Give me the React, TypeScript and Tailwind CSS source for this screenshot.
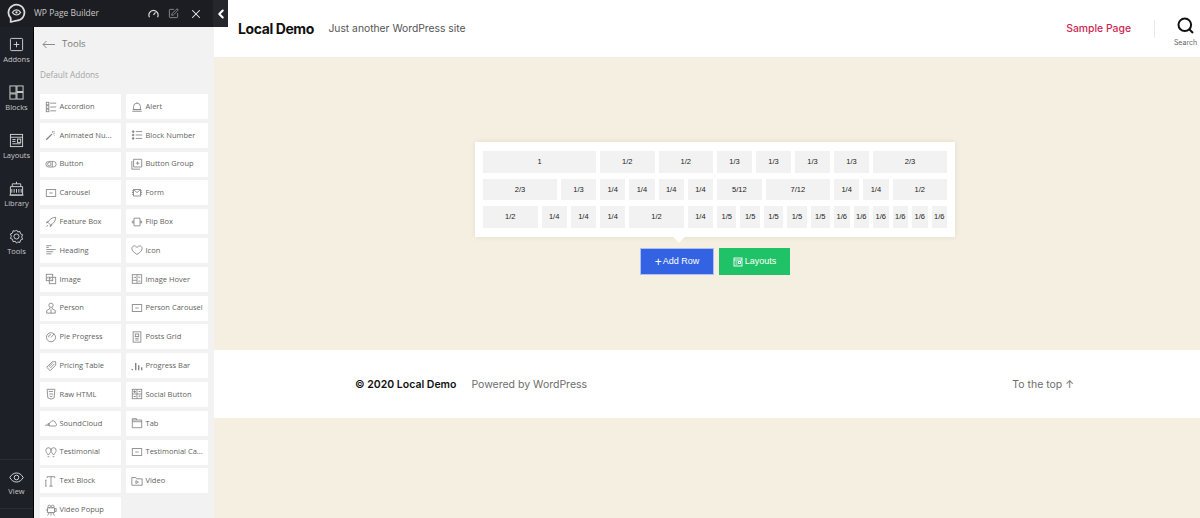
import React from "react";
import { X, SquarePen, ChevronLeft } from "lucide-react";

const S = ({ children }: { children: React.ReactNode }) => (
  <svg width="12" height="12" viewBox="0 0 14 14" fill="none" stroke="#858585" strokeWidth="1" className="shrink-0">{children}</svg>
);
const Slide = () => <S><rect x="1.500" y="3" width="11" height="8" /><path d="M5 7h4" /></S>;
const Acc = () => <S><rect x="1.500" y="1.500" width="3" height="3" /><rect x="1.500" y="5.500" width="3" height="3" /><rect x="1.500" y="9.500" width="3" height="3" /><path d="M6 2.500h7M6 7h7M6 11.500h7" /></S>;
const Alert = () => <S><path d="M3 10V6.500a4 4 0 0 1 8 0V10zM7 1.500v1M1.500 12h11" /><path d="M2 10h10" /></S>;
const Wand = () => <S><path d="M1.500 12.500L8 6" strokeWidth="1.500" /><path d="M9 2.500v1.500M11.500 5h-1.500M11 2.500l-1 1M8 5l1-1M11 7.500l-1-1" /></S>;
const BlockNum = () => <S><circle cx="2.500" cy="3" r="1" fill="#858585" /><circle cx="2.500" cy="7" r="1" fill="#858585" /><circle cx="2.500" cy="11" r="1" fill="#858585" /><path d="M5.500 3h7.500M5.500 7h7.500M5.500 11h7.500" /></S>;
const Btn = () => <S><rect x="1" y="4" width="12" height="6.500" rx="3.200" /><circle cx="5" cy="7.200" r="2" /><path d="M8.500 4v6.500" /></S>;
const BtnGroup = () => <S><path d="M3 10.500V1.500h9.500v9z" /><path d="M1 3.500v9.500h9.500M7.700 4v4M5.700 6h4" /></S>;
const Form = () => <S><rect x="3" y="3" width="8" height="7.500" /><path d="M3 3l4 3.500L11 3M1 4.500h2M1 6.500h2M1 8.500h2M11 4.500h2M11 6.500h2M11 8.500h2" /></S>;
const Rocket = () => <S><path d="M5 9l-1.500-1.500C5 4 8.500 1.500 12.500 1.500c0 4-2.500 7.500-6 9z" /><path d="M3.500 7.500l-2 .5 2-2.500M6.500 10.500l-.5 2 2.500-2M3.500 10.500l-1.500 2" /></S>;
const Flip = () => <S><path d="M3.500 2.500h7v9h-7zM3.500 6H1.500v2h2M10.500 6h2v2h-2" /></S>;
const Head = () => <S><path d="M1.500 2h6M1.500 4h3M1.500 6.500h11M1.500 9h8M1.500 11.500h6" /></S>;
const Heart = () => <S><path d="M7 12.300C3.500 9.800 1 7.700 1 5.200 1 3.300 2.400 2.200 4 2.200c1.300 0 2.400.7 3 1.900.6-1.200 1.700-1.900 3-1.900 1.600 0 3 1.100 3 3 0 2.500-2.500 4.600-6 7.100z" /></S>;
const Img = () => <S><rect x="1.500" y="1.500" width="7.500" height="7.500" /><rect x="5" y="5" width="7.500" height="7.500" /><path d="M1.500 7l2.500-2.500L7 7.500" /></S>;
const ImgHover = () => <S><rect x="1.500" y="2" width="11" height="10" /><path d="M1.500 8.500h5.500M7 2v10M8.500 5h2.500M8.500 9.500h2.500M3 6l1.500-1.500L6 6" /></S>;
const Pers = () => <S><circle cx="7" cy="3.800" r="2.500" /><path d="M5.500 6.500v1.500L2 10v3h10v-3L8.500 8V6.500M7 8.500v4.500" /></S>;
const Pie = () => <S><circle cx="7" cy="7.300" r="5.300" /><path d="M4 7.300a3 3 0 0 1 3-3M7 7.300l3.700-4" /></S>;
const Posts = () => <S><rect x="2.500" y="1" width="9" height="12" /><rect x="5" y="3.500" width="4" height="3" /><path d="M5 8.500h4M5 10.500h4" /></S>;
const Price = () => <S><path d="M2 8.500L8.500 2H12.500V6L6 12.500z" /><path d="M4.500 8L9 3.500M6 9.500L11 4.500" /></S>;
const Bars = () => <S><path d="M1.500 12V10.500M5.500 12V3.500M9 12V6M12.500 12V8.500" strokeWidth="1.600" /></S>;
const Html = () => <S><path d="M2.500 1.500h9l-.8 10-3.700 1.500-3.700-1.500z" /><path d="M4.500 4h5M5 7h4.500M5.500 9.500l1.500.6 1.700-.6" /></S>;
const Social = () => <S><rect x="1.500" y="1.500" width="11" height="11" /><path d="M7 1.500v11M1.500 7h11" /><circle cx="4.200" cy="4.200" r="1" fill="#858585" /><path d="M3 10h2.500M9 4h2M9 10l2-1" strokeWidth="1.200" /></S>;
const Sound = () => <S><path d="M5 10.500h7a1.700 1.700 0 0 0 .3-3.300 3 3 0 0 0-5.800-1A2.300 2.300 0 0 0 5 7zM1 10.500V9M2.500 10.500V8M4 10.500V7" /></S>;
const Tab = () => <S><path d="M1.500 3.500V12.500H12.500V3.500zM1.500 3.500V2h5v1.500M1.500 5.500h11" /></S>;
const Quote = () => <S><path d="M4 10.500C2.500 8.500 1 7 1 5a3 3 0 0 1 6 0c0 2-1.500 3.500-3 5.500zM10 10.500C8.500 8.500 7 7 7 5a3 3 0 0 1 6 0c0 2-1.500 3.500-3 5.500z" /><path d="M3 12.500h2M9 12.500h2" /></S>;
const TextB = () => <S><path d="M2.500 3.500V2h9v1.500M7 2v11M5 13h4M1 6v7M.2 6h1.600M.2 13h1.600" /></S>;
const Video = () => <S><path d="M1 3h4.500l1 1.500H13V12H1z" /><path d="M5.700 6.500v3.500l3-1.700z" /></S>;
const Popup = () => <S><circle cx="5" cy="2.800" r="1.500" /><circle cx="9" cy="2.800" r="1.500" /><rect x="3" y="4.500" width="8" height="5.500" /><path d="M11 6l2-1v4l-2-1M5 10l-2 3.500M9 10l2 3.500M7 10v3.500M1 7h2" /></S>;

const addons: [string, React.FC][] = [
  ["Accordion", Acc], ["Alert", Alert],
  ["Animated Nu...", Wand], ["Block Number", BlockNum],
  ["Button", Btn], ["Button Group", BtnGroup],
  ["Carousel", Slide], ["Form", Form],
  ["Feature Box", Rocket], ["Flip Box", Flip],
  ["Heading", Head], ["Icon", Heart],
  ["Image", Img], ["Image Hover", ImgHover],
  ["Person", Pers], ["Person Carousel", Slide],
  ["Pie Progress", Pie], ["Posts Grid", Posts],
  ["Pricing Table", Price], ["Progress Bar", Bars],
  ["Raw HTML", Html], ["Social Button", Social],
  ["SoundCloud", Sound], ["Tab", Tab],
  ["Testimonial", Quote], ["Testimonial Ca...", Slide],
  ["Text Block", TextB], ["Video", Video],
  ["Video Popup", Popup],
];

const R = ({ children }: { children: React.ReactNode }) => (
  <svg width="15" height="15" viewBox="0 0 16 16" fill="none" stroke="#d4d4d4" strokeWidth="1">{children}</svg>
);
const rail: { label: string; icon: React.ReactNode }[] = [
  { label: "Addons", icon: <R><rect x="1.500" y="1.500" width="13" height="13" rx="1" /><path d="M8 5v6M5 8h6" /></R> },
  { label: "Blocks", icon: <R><rect x="1" y="1" width="6.500" height="7.500" /><rect x="8.500" y="1" width="6.500" height="6" /><rect x="1" y="9.500" width="6.500" height="5.500" /><rect x="8.500" y="8" width="6.500" height="7" /></R> },
  { label: "Layouts", icon: <R><rect x="1.500" y="1.500" width="13" height="13" /><path d="M1.500 4.500h13M3.500 7h3.500M3.500 9h3.500M3.500 11.500h9" /><rect x="9" y="6.500" width="3.500" height="3.500" /></R> },
  { label: "Library", icon: <R><path d="M1.500 15V6h13v9zM.5 15h15M3.500 6V3h9v3M8 3V.8M5.500 8.500v4M8 8.500v4M10.500 8.500v4M3 8.500v4M13 8.500v4" /></R> },
  { label: "Tools", icon: <R><path d="M8 1l1.300 2.100 2.400-.4.5 2.400 2.300 1-1 2.400 1 2.400-2.300.9-.5 2.500-2.400-.4L8 15l-1.300-1.900-2.400.4-.5-2.500-2.300-.9 1-2.400-1-2.400 2.300-1 .5-2.400 2.400.4z" /><circle cx="8" cy="8" r="2.700" /></R> },
];

type Group = { cols: string; cells: [string, string][] };
const rows: Group[][] = [
  [
    { cols: "grid-cols-12", cells: [["1", "col-span-12"]] },
    { cols: "grid-cols-12", cells: [["1/2", "col-span-6"], ["1/2", "col-span-6"]] },
    { cols: "grid-cols-12", cells: [["1/3", "col-span-4"], ["1/3", "col-span-4"], ["1/3", "col-span-4"]] },
    { cols: "grid-cols-12", cells: [["1/3", "col-span-4"], ["2/3", "col-span-8"]] },
  ],
  [
    { cols: "grid-cols-12", cells: [["2/3", "col-span-8"], ["1/3", "col-span-4"]] },
    { cols: "grid-cols-12", cells: [["1/4", "col-span-3"], ["1/4", "col-span-3"], ["1/4", "col-span-3"], ["1/4", "col-span-3"]] },
    { cols: "grid-cols-12", cells: [["5/12", "col-span-5"], ["7/12", "col-span-7"]] },
    { cols: "grid-cols-12", cells: [["1/4", "col-span-3"], ["1/4", "col-span-3"], ["1/2", "col-span-6"]] },
  ],
  [
    { cols: "grid-cols-12", cells: [["1/2", "col-span-6"], ["1/4", "col-span-3"], ["1/4", "col-span-3"]] },
    { cols: "grid-cols-12", cells: [["1/4", "col-span-3"], ["1/2", "col-span-6"], ["1/4", "col-span-3"]] },
    { cols: "grid-cols-5", cells: [["1/5", "col-span-1"], ["1/5", "col-span-1"], ["1/5", "col-span-1"], ["1/5", "col-span-1"], ["1/5", "col-span-1"]] },
    { cols: "grid-cols-6", cells: [["1/6", "col-span-1"], ["1/6", "col-span-1"], ["1/6", "col-span-1"], ["1/6", "col-span-1"], ["1/6", "col-span-1"], ["1/6", "col-span-1"]] },
  ],
];

const Logo = () => (
  <svg width="19" height="21" viewBox="0 0 18 20" fill="none" stroke="#dcdcdc" strokeWidth="1.700">
    <path d="M3.500 18V14.500A7.600 7.600 0 1 1 9 16.800c-1.800 0-3.500 1.200-5.500 1.200z" />
    <path d="M5 9c1.100-1.700 2.500-2.500 4-2.500s2.900.8 4 2.500c-1.100 1.600-2.500 2.400-4 2.400S6.100 10.600 5 9z" strokeWidth="1.100" />
    <circle cx="9" cy="9" r="1.100" fill="#dcdcdc" stroke="none" />
  </svg>
);

const Speed = () => (
  <svg width="11" height="11" viewBox="0 0 12 12" fill="none" stroke="#d8d8d8" strokeWidth="1.300">
    <path d="M1.600 10a5 5 0 1 1 8.800 0" />
    <path d="M6 7.500l2.200-2.700" />
  </svg>
);

const ArrowBack = () => (
  <svg width="13" height="9" viewBox="0 0 13 9" fill="none" stroke="#8c8c8c" strokeWidth="1">
    <path d="M13 4.500H1M4.500 1L1 4.500 4.500 8" />
  </svg>
);

const SearchGlyph = () => (
  <svg width="17" height="17" viewBox="0 0 17 17" fill="none" stroke="#111111" strokeWidth="2">
    <circle cx="7.800" cy="7.800" r="6.300" />
    <path d="M12.500 12.500l3.500 3.500" />
  </svg>
);

const EyeGlyph = () => (
  <svg width="15" height="11" viewBox="0 0 15 11" fill="none" stroke="#d4d4d4" strokeWidth="1">
    <path d="M.8 5.500C2.500 2.500 4.800 1 7.500 1s5 1.500 6.700 4.500C12.500 8.500 10.200 10 7.500 10S2.500 8.500.8 5.500z" />
    <circle cx="7.500" cy="5.500" r="2.300" />
  </svg>
);

const LayoutGlyph = () => (
  <svg width="10" height="10" viewBox="0 0 10 10" fill="none" stroke="#ffffff" strokeWidth="0.9">
    <rect x="1" y="1" width="8" height="8" />
    <path d="M1 3h8M2.500 5h2M2.500 7h2" />
    <rect x="5.500" y="4.500" width="2" height="2" />
  </svg>
);

export default function App() {
  return (
    <div className="w-[1200px] h-[518px] overflow-hidden flex bg-[#f5efe1] font-['Inter',sans-serif]">
      <div className="w-[214px] shrink-0 flex flex-col font-['Open_Sans',sans-serif] relative z-10">
        <div className="w-[228px] h-[27px] shrink-0 bg-[#1c1d22] flex items-center text-[#c9c9c9]">
          <div className="w-[33px] flex justify-center"><Logo /></div>
          <span className="text-[8.500px] ml-[1px] flex-1">WP Page Builder</span>
          <div className="flex items-center gap-[9px] mr-[10px]">
            <Speed />
            <SquarePen size={11} strokeWidth={1.200} color="#d8d8d8" />
            <X size={14} strokeWidth={1.800} color="#eeeeee" className="ml-[1px]" />
          </div>
          <div className="w-[15px] h-full bg-[#25272d] flex items-center justify-center">
            <ChevronLeft size={14} strokeWidth={3.500} color="#ffffff" />
          </div>
        </div>
        <div className="flex flex-1 min-h-0">
          <div className="w-[34px] shrink-0 bg-[#1e2027] border-r border-black flex flex-col justify-between">
            <div className="flex flex-col">
              {rail.map(({ label, icon }) => (
                <div key={label} className="h-[48px] flex flex-col items-center pt-[10px] text-[7.500px] leading-[10px] text-[#c8c8c8]">
                  {icon}
                  <span className="mt-[2px]">{label}</span>
                </div>
              ))}
            </div>
            <div className="h-[50px] mb-[9px] border-t border-b border-[#2b2d35] flex flex-col items-center pt-[12px] text-[7.500px] leading-[10px] text-[#c8c8c8]">
              <EyeGlyph />
              <span className="mt-[3px]">View</span>
            </div>
          </div>
          <div className="flex-1 bg-[#f2f2f2] overflow-hidden">
            <div className="h-[35px] flex items-center pl-[8px] gap-[7px] text-[9.500px] text-[#777]">
              <ArrowBack />
              <span>Tools</span>
            </div>
            <div className="pl-[6px] mt-[7px] h-[11px] leading-[11px] text-[8.200px] text-[#a5a5a5]">Default Addons</div>
            <div className="grid grid-cols-[81px_82px] gap-x-[5px] gap-y-[3.800px] pl-[6px] mt-[14px]">
              {addons.map(([name, Icon]) => (
                <div key={name} className="h-[25px] bg-white rounded-[1px] flex items-center pl-[4.500px] text-[7.500px] text-[#5f5f5f] whitespace-nowrap">
                  <Icon />
                  <span className="ml-[3px]">{name}</span>
                </div>
              ))}
            </div>
          </div>
        </div>
      </div>

      <div className="flex-1 flex flex-col min-w-0">
        <header className="h-[57px] shrink-0 bg-white flex items-center pl-[24px]">
          <span className="text-[14px] font-bold text-[#111] tracking-[-0.4px]">Local Demo</span>
          <span className="text-[10.300px] text-[#555] ml-[14.500px]">Just another WordPress site</span>
          <span className="text-[10.400px] font-medium text-[#cd2653] ml-auto">Sample Page</span>
          <div className="w-px h-[18px] bg-[#e8e8e8] ml-[23px]" />
          <div className="w-[45px] pl-[16px] flex flex-col items-center pt-[7px]">
            <SearchGlyph />
            <span className="text-[7px] leading-[9px] text-[#666] mt-[4px]">Search</span>
          </div>
        </header>
        <main className="h-[293px] shrink-0 pl-[261px] pt-[85px]">
          <div className="relative w-[480px] h-[95px] bg-white shadow-[0_0_6px_rgba(0,0,0,0.08)] pt-[9px] px-[8px] font-['Liberation_Sans',sans-serif]">
            <div className="flex flex-col gap-[6px]">
              {rows.map((row, i) => (
                <div key={i} className="grid grid-cols-4 gap-x-[4px]">
                  {row.map((g, j) => (
                    <div key={j} className={`grid gap-x-[4px] ${g.cols}`}>
                      {g.cells.map(([t, span], k) => (
                        <div key={k} className={`${span} h-[21.500px] bg-[#f2f2f2] flex items-center justify-center text-[7.500px] text-[#222]`}>{t}</div>
                      ))}
                    </div>
                  ))}
                </div>
              ))}
            </div>
            <div className="absolute left-[200px] -bottom-[4px] w-[8px] h-[8px] rotate-45 bg-white" />
          </div>
          <div className="flex justify-center gap-[5px] w-[480px] mt-[11px] font-['Liberation_Sans',sans-serif] text-[9px] text-white">
            <div className="w-[74px] h-[27px] bg-[#3363e3] border border-white/60 flex items-center justify-center">
              <span className="text-[12px] leading-none mr-[1px]">+</span>Add Row
            </div>
            <div className="w-[71px] h-[27px] bg-[#1fc266] flex items-center justify-center gap-[2px]">
              <LayoutGlyph />Layouts
            </div>
          </div>
        </main>
        <footer className="h-[68px] shrink-0 bg-white flex items-center pl-[141px] pr-[126px] pt-[1px] text-[10.500px]">
          <span className="font-semibold text-[#111]">© 2020 Local Demo</span>
          <span className="text-[#6d6d6d] ml-[15px]">Powered by WordPress</span>
          <span className="text-[#6d6d6d] ml-auto">To the top ↑</span>
        </footer>
      </div>
    </div>
  );
}
